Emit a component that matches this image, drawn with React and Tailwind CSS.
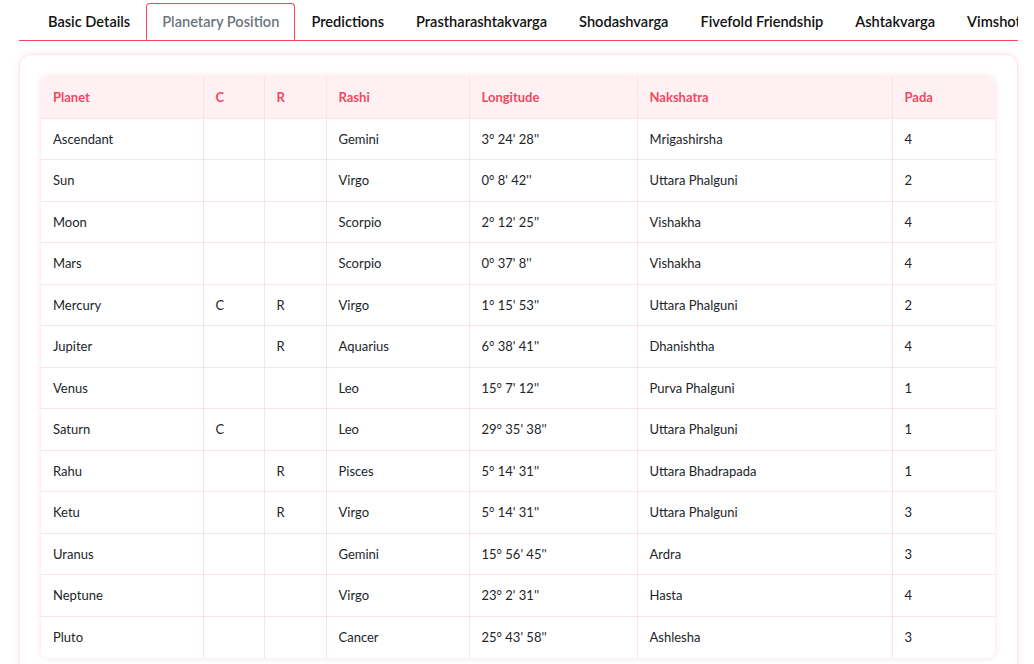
import React from 'react';

const tabs = [
    "Basic Details",
    "Planetary Position",
    "Predictions",
    "Prastharashtakvarga",
    "Shodashvarga",
    "Fivefold Friendship",
    "Ashtakvarga",
    "Vimshottari Dasha",
];

const planets = [
    { name: "Ascendant", c: "", r: "", rashi: "Gemini", lon: "3° 24' 28''", nak: "Mrigashirsha", pada: 4 },
    { name: "Sun", c: "", r: "", rashi: "Virgo", lon: "0° 8' 42''", nak: "Uttara Phalguni", pada: 2 },
    { name: "Moon", c: "", r: "", rashi: "Scorpio", lon: "2° 12' 25''", nak: "Vishakha", pada: 4 },
    { name: "Mars", c: "", r: "", rashi: "Scorpio", lon: "0° 37' 8''", nak: "Vishakha", pada: 4 },
    { name: "Mercury", c: "C", r: "R", rashi: "Virgo", lon: "1° 15' 53''", nak: "Uttara Phalguni", pada: 2 },
    { name: "Jupiter", c: "", r: "R", rashi: "Aquarius", lon: "6° 38' 41''", nak: "Dhanishtha", pada: 4 },
    { name: "Venus", c: "", r: "", rashi: "Leo", lon: "15° 7' 12''", nak: "Purva Phalguni", pada: 1 },
    { name: "Saturn", c: "C", r: "", rashi: "Leo", lon: "29° 35' 38''", nak: "Uttara Phalguni", pada: 1 },
    { name: "Rahu", c: "", r: "R", rashi: "Pisces", lon: "5° 14' 31''", nak: "Uttara Bhadrapada", pada: 1 },
    { name: "Ketu", c: "", r: "R", rashi: "Virgo", lon: "5° 14' 31''", nak: "Uttara Phalguni", pada: 3 },
    { name: "Uranus", c: "", r: "", rashi: "Gemini", lon: "15° 56' 45''", nak: "Ardra", pada: 3 },
    { name: "Neptune", c: "", r: "", rashi: "Virgo", lon: "23° 2' 31''", nak: "Hasta", pada: 4 },
    { name: "Pluto", c: "", r: "", rashi: "Cancer", lon: "25° 43' 58''", nak: "Ashlesha", pada: 3 },
];

const PlanetaryTable = () => (
    <div className="rounded-lg overflow-hidden shadow-[0_0_6px_rgba(240,70,90,0.18)]">
        <table className="w-full table-fixed border-collapse text-[13px] text-[#212529]">
            <colgroup>
                <col className="w-[162px]" />
                <col className="w-[61px]" />
                <col className="w-[62px]" />
                <col className="w-[143px]" />
                <col className="w-[168px]" />
                <col className="w-[255px]" />
                <col />
            </colgroup>
            <thead>
                <tr className="h-[42px] bg-[#fff1f3] text-[#ee4a5f] text-left">
                    {["Planet", "C", "R", "Rashi", "Longitude", "Nakshatra", "Pada"].map((h, i) => (
                        <th key={h} className={`px-3 pt-px font-bold border-b border-[#fde3e7] ${i < 6 ? 'border-r' : ''}`}>{h}</th>
                    ))}
                </tr>
            </thead>
            <tbody>
                {planets.map((p, idx) => {
                    const last = idx === planets.length - 1;
                    const cell = `px-3 pt-px border-[#fde3e7] ${last ? '' : 'border-b'}`;
                    return (
                        <tr key={p.name} className="h-[41.5px] bg-white">
                            <td className={`${cell} border-r`}>{p.name}</td>
                            <td className={`${cell} border-r`}>{p.c}</td>
                            <td className={`${cell} border-r`}>{p.r}</td>
                            <td className={`${cell} border-r`}>{p.rashi}</td>
                            <td className={`${cell} border-r`}>{p.lon}</td>
                            <td className={`${cell} border-r`}>{p.nak}</td>
                            <td className={cell}>{p.pada}</td>
                        </tr>
                    );
                })}
            </tbody>
        </table>
    </div>
);

export default function App() {
    return (
        <div className="bg-white min-h-[664px] pt-[3px] pl-[19px] pr-[16px] font-['Segoe_UI','Lato',sans-serif]">
            {/* Tabs */}
            <div className="flex border-b border-[#f0475c] overflow-hidden pl-[13px] whitespace-nowrap">
                {tabs.map((t) => {
                    const active = t === "Planetary Position";
                    return (
                        <div
                            key={t}
                            className={
                                active
                                    ? "px-[15px] pt-px h-[37px] flex items-center -mb-px border border-b-white border-[#f0475c] rounded-t-[4px] bg-white text-[#6c757d] text-[14.6px] font-semibold shrink-0"
                                    : "px-4 pt-px h-[37px] flex items-center text-[14.6px] font-semibold text-[#111] shrink-0"
                            }
                        >
                            {t}
                        </div>
                    );
                })}
            </div>

            {/* Card */}
            <div className="mt-[13px] rounded-xl border border-[#fde6ea] bg-white shadow-[0_0_6px_rgba(240,70,90,0.12)] pl-[21px] pr-[22px] pt-[21px] pb-6">
                <PlanetaryTable />
            </div>
        </div>
    );
}
